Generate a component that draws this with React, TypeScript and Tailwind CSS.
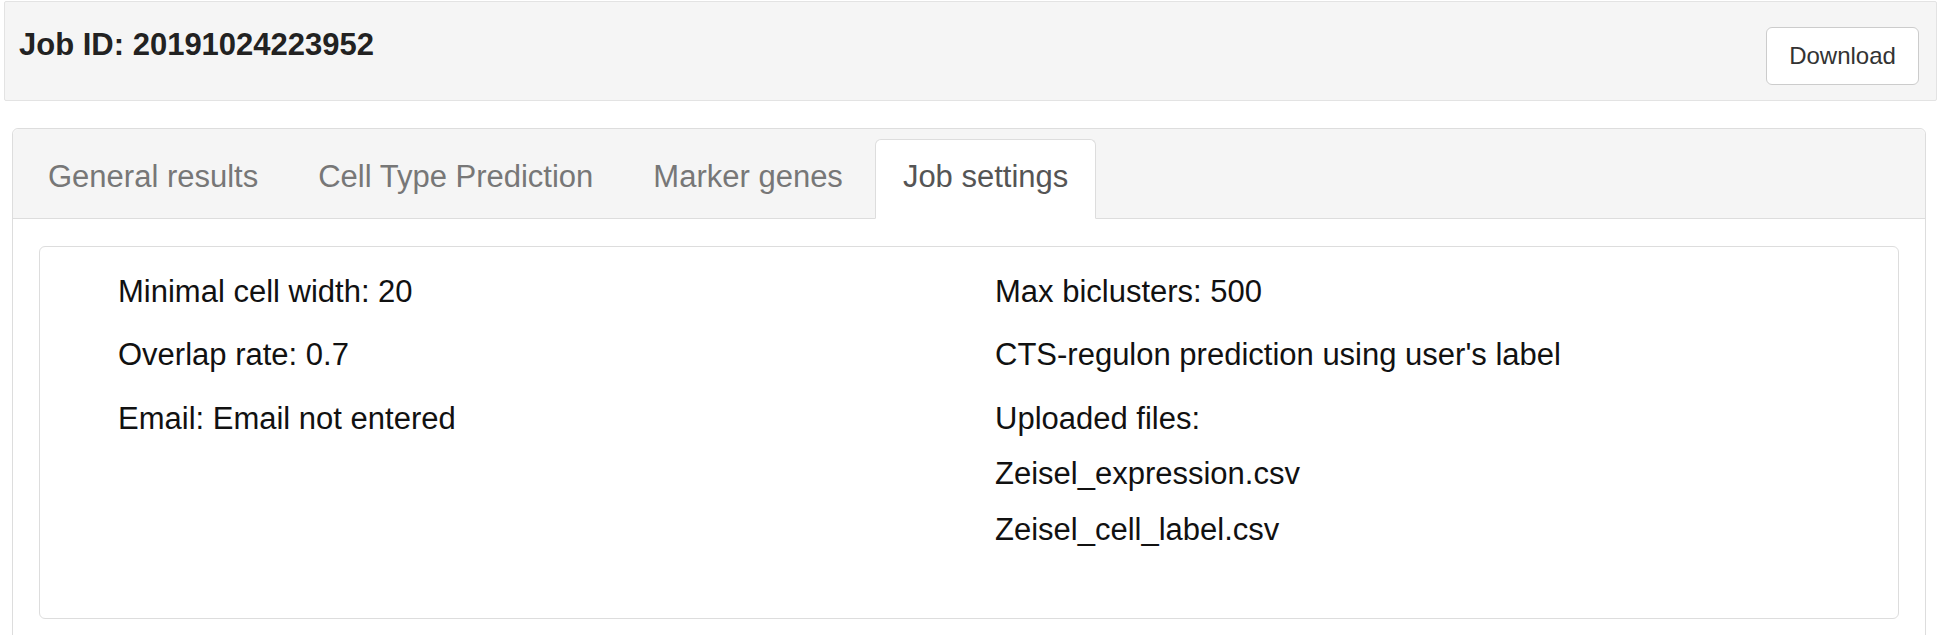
import React from 'react';

const tabs = ['General results', 'Cell Type Prediction', 'Marker genes', 'Job settings'];
const activeTab = 'Job settings';

const leftItems = ['Minimal cell width: 20', 'Overlap rate: 0.7', 'Email: Email not entered'];
const uploadedFiles = ['Zeisel_expression.csv', 'Zeisel_cell_label.csv'];

export default function App() {
  return (
    <div className="h-[635px] w-full overflow-hidden bg-white pt-px font-['Liberation_Sans',Arial,sans-serif]">
      {/* job header */}
      <div className="ml-[4px] mr-[6px] flex h-[100px] items-start justify-between rounded-[2px] border border-[#e3e3e3] bg-[#f5f5f5] pl-[14px] pr-[17px] pt-[25px]">
        <h4 className="text-[31px] font-bold leading-[36px] text-[#222]">Job ID: 20191024223952</h4>
        <button className="h-[58px] w-[153px] rounded-[6px] border border-[#ccc] bg-white text-[24px] text-[#333]">
          Download
        </button>
      </div>

      {/* results panel */}
      <div className="ml-[12px] mr-[17px] mt-[27px] rounded-[6px] border border-[#ddd] bg-white">
        <div className="rounded-t-[6px] border-b border-[#ddd] bg-[#f5f5f5] pl-[7px] pt-[10px]">
          <ul className="-mb-px flex">
            {tabs.map((tab) => (
              <li key={tab} className="mr-[4px]">
                <a
                  className={
                    tab === activeTab
                      ? 'block rounded-t-[6px] border border-[#ddd] border-b-white bg-white px-[27px] pb-[19px] pt-[15px] text-[31px] leading-[44px] text-[#555]'
                      : 'block rounded-t-[6px] border border-transparent px-[27px] pb-[19px] pt-[15px] text-[31px] leading-[44px] text-[#777]'
                  }
                >
                  {tab}
                </a>
              </li>
            ))}
          </ul>
        </div>

        <div className="px-[26px] pb-[40px] pt-[27px]">
          <div className="h-[373px] rounded-[6px] border border-[#ddd] bg-white pl-[78px] pt-[23px] text-[31px] leading-[44px] text-[#111]">
            <div className="grid grid-cols-[877px_1fr]">
              <div>
                {leftItems.map((item) => (
                  <p key={item} className="mb-[19.3px]">{item}</p>
                ))}
              </div>
              <div>
                <p className="mb-[19.3px]">Max biclusters: 500</p>
                <p className="mb-[19.3px]">CTS-regulon prediction using user's label</p>
                <p className="mb-[11.7px]">Uploaded files:</p>
                {uploadedFiles.map((file) => (
                  <p key={file} className="mb-[11.7px]">{file}</p>
                ))}
              </div>
            </div>
          </div>
        </div>
      </div>
    </div>
  );
}
